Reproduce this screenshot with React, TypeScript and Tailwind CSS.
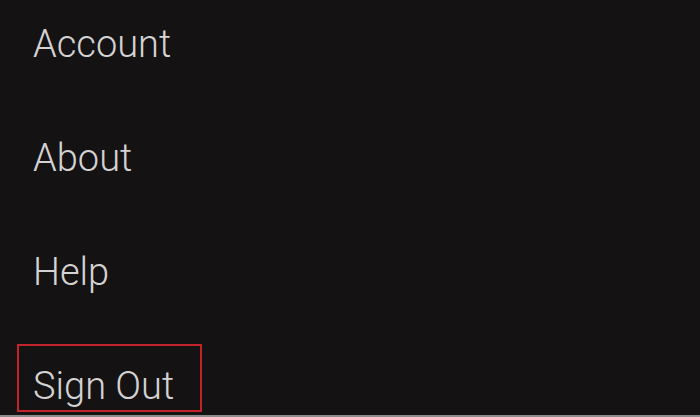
import React from 'react';

const items = [
  { label: 'Account', selected: false },
  { label: 'About', selected: false },
  { label: 'Help', selected: false },
  { label: 'Sign Out', selected: true },
];

export default function App() {
  return (
    <div className="w-[700px] h-[417px] overflow-hidden bg-[#141213] flex flex-col font-['Roboto','Liberation_Sans',sans-serif]">
      <div className="flex-1 flex flex-col gap-[46px] pt-[2px] pl-[17px]">
        {items.map((item) => (
          <div
            key={item.label}
            className={`w-fit border-2 pt-[21px] pb-[5px] pl-[14px] pr-[26px] text-[38px] leading-none font-light text-[#d4d2d3] ${
              item.selected ? 'border-[#c3232b]' : 'border-transparent'
            }`}
          >
            {item.label}
          </div>
        ))}
      </div>
      <div className="h-[2px] bg-[#8c8c8c]" />
    </div>
  );
}
